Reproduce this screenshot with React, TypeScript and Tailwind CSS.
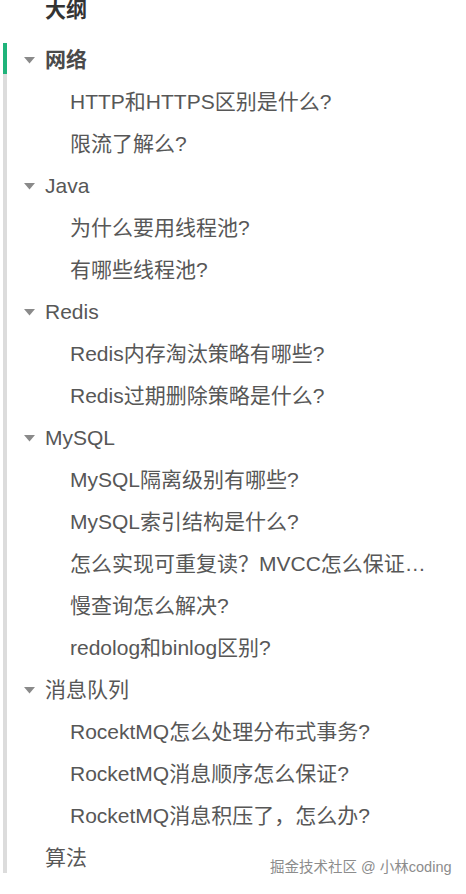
import React from "react";

type Item = { title: string; children?: string[]; open: boolean };

const data: Item[] = [
  { title: "网络", open: true, children: ["HTTP和HTTPS区别是什么?", "限流了解么?"] },
  { title: "Java", open: true, children: ["为什么要用线程池?", "有哪些线程池?"] },
  { title: "Redis", open: true, children: ["Redis内存淘汰策略有哪些?", "Redis过期删除策略是什么?"] },
  {
    title: "MySQL",
    open: true,
    children: [
      "MySQL隔离级别有哪些?",
      "MySQL索引结构是什么?",
      "怎么实现可重复读？MVCC怎么保证…",
      "慢查询怎么解决?",
      "redolog和binlog区别?",
    ],
  },
  {
    title: "消息队列",
    open: true,
    children: ["RocektMQ怎么处理分布式事务?", "RocketMQ消息顺序怎么保证?", "RocketMQ消息积压了，怎么办?"],
  },
  { title: "算法", open: false },
];

function Caret() {
  return (
    <svg width="11" height="7" viewBox="0 0 11 7" className="shrink-0">
      <polygon points="0,0 11,0 5.5,6.5" fill="#8a8a8a" />
    </svg>
  );
}

export default function App() {
  return (
    <div
      className="relative w-[466px] h-[894px] bg-white overflow-hidden"
      style={{ fontFamily: '"Liberation Sans", "Noto Sans CJK SC", sans-serif' }}
    >
      <div className="pl-[45px] h-[19px] leading-[19px] text-[21px] font-bold text-[#333]">大纲</div>
      <div className="mt-[20px] flex">
        <div className="ml-[3px] mt-[4px] w-[4px] h-[830px] flex flex-col">
          <div className="h-[31px] bg-[#1fb37a]" />
          <div className="flex-1 bg-[#dcdcdc]" />
        </div>
        <div className="flex-1 flex flex-col text-[21px] text-[#575757]">
          {data.map((it) => (
            <React.Fragment key={it.title}>
              <div className="h-[42px] flex items-center">
                <div className="w-[38px] flex justify-end pr-[10px]">{it.open ? <Caret /> : null}</div>
                <span className={it.title === "网络" ? "font-bold text-[#4a4a4a]" : ""}>{it.title}</span>
              </div>
              {it.children?.map((c) => (
                <div key={c} className="h-[42px] flex items-center pl-[63px] whitespace-nowrap">
                  {c}
                </div>
              ))}
            </React.Fragment>
          ))}
        </div>
      </div>
      <div
        className="absolute left-[270px] top-[858px] text-[14.5px] leading-[18px] text-[#8c8c8c] whitespace-nowrap"
        style={{ textShadow: "0 0 2px #fff, 0 0 2px #fff" }}
      >
        掘金技术社区 @ 小林coding
      </div>
    </div>
  );
}
